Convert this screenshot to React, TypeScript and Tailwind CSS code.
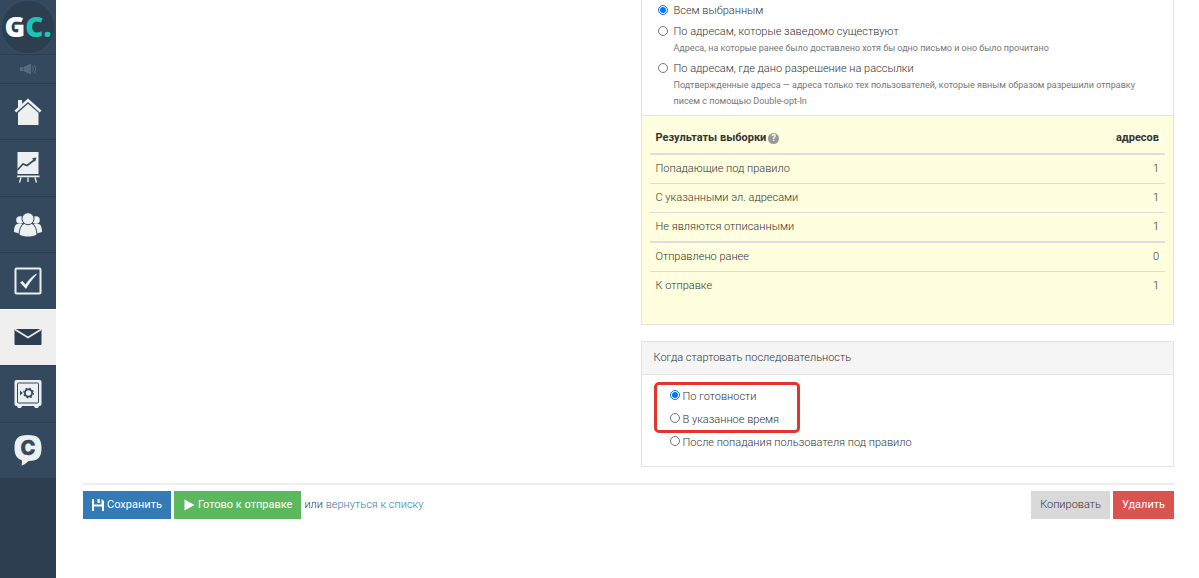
import React from 'react';

interface StatRow {
    label: string;
    value: number;
    // Divider drawn above the row
    divider: string;
}

const STATS: StatRow[] = [
    { label: 'Попадающие под правило', value: 1, divider: 'border-t-2' },
    { label: 'С указанными эл. адресами', value: 1, divider: 'border-t' },
    { label: 'Не являются отписанными', value: 1, divider: 'border-t' },
    { label: 'Отправлено ранее', value: 0, divider: 'border-t-2' },
    { label: 'К отправке', value: 1, divider: 'border-t' },
];

const AUDIENCE = [
    { id: 'all', label: 'Всем выбранным' },
    {
        id: 'existing',
        label: 'По адресам, которые заведомо существуют',
        hint: 'Адреса, на которые ранее было доставлено хотя бы одно письмо и оно было прочитано',
    },
    {
        id: 'confirmed',
        label: 'По адресам, где дано разрешение на рассылки',
        hint: 'Подтвержденные адреса — адреса только тех пользователей, которые явным образом разрешили отправку писем с помощью Double-opt-In',
    },
];

const HomeIcon = () => (
    <svg viewBox="0 0 28 28" className="h-7 w-7" fill="currentColor">
        <path d="M4 2h4v4.500L4 10z" />
        <path d="M14 0.500 0.500 12.500 2.200 14.500 14 4 25.800 14.500 27.500 12.500z" />
        <path d="M14 5.800 4 14.700V27h20.500V14.700z" />
    </svg>
);

const ChartIcon = () => (
    <svg viewBox="0 0 28 34" className="h-[34px] w-7">
        <path d="M3.500 1h21v22h-21zM3 24.500h22.500v1.800H3z" fill="currentColor" />
        <path d="M3.500 19 9 13l4 1.500 8-6" fill="none" stroke="#34495e" strokeWidth="1.600" />
        <path d="m18 7.300 4.500-.8-1.500 4.300z" fill="#34495e" />
        <path d="M7 26.500 5.500 31.500M14 26.500v4.500M21 26.500l1.500 5" stroke="currentColor" strokeWidth="1.300" />
    </svg>
);

const UsersIcon = () => (
    <svg viewBox="0 0 28 26" className="h-[26px] w-7" fill="currentColor">
        <circle cx="6" cy="8" r="3.800" />
        <circle cx="22" cy="8" r="3.800" />
        <path d="M2 12.500c2-1 5-1 6.500 0L5 21.500 0 20c0-3 .5-6 2-7.500zM26 12.500c-2-1-5-1-6.500 0l3.500 9 5-1.500c0-3-.5-6-2-7.500z" />
        <g stroke="#34495e" strokeWidth="1">
            <path d="M9 12c3-1.500 7-1.500 10 0 2.500 2 4 7 4 11-5 2.700-13 2.700-18 0 0-4 1.500-9 4-11z" />
            <circle cx="14" cy="6.700" r="6" />
        </g>
    </svg>
);

const TaskIcon = () => (
    <svg viewBox="0 0 28 28" className="h-7 w-7">
        <rect x="1.500" y="1.500" width="25" height="25" rx="1" fill="none" stroke="currentColor" strokeWidth="2" />
        <path d="M6 15.500 8.500 14l3 3.500C14.500 13 18 9 22.500 6.500v1.200C18.500 12 15 16.500 12 22z" fill="currentColor" />
    </svg>
);

const MailIcon = () => (
    <svg viewBox="0 0 28 18" className="h-[18px] w-7">
        <rect x="0.500" y="1" width="27" height="16" rx="1" fill="currentColor" />
        <path d="m1 1.500 13 8 13-8" fill="none" stroke="#efefef" strokeWidth="1.500" />
    </svg>
);

const SafeIcon = () => (
    <svg viewBox="0 0 28 28" className="h-7 w-7">
        <path d="M2.500 0h23a2 2 0 0 1 2 2v22a2 2 0 0 1-2 2H25l-1 2h-3l-1-2H8l-1 2H4l-1-2h-.5a2 2 0 0 1-2-2V2a2 2 0 0 1 2-2z" fill="currentColor" />
        <rect x="3.500" y="3" width="21" height="20" rx="1" fill="none" stroke="#34495e" strokeWidth="1" />
        <circle cx="14.500" cy="13" r="3.600" fill="none" stroke="#34495e" strokeWidth="1.800" />
        <circle cx="14.500" cy="13" r="4.800" fill="none" stroke="#34495e" strokeWidth="1.200" strokeDasharray="1.900 1.870" />
        <path d="m6 10.500 2.800 2.500L6 15.500z" fill="#34495e" />
    </svg>
);

const ChatIcon = () => (
    <svg viewBox="0 0 28 32" className="h-8 w-7">
        <path d="M14 1c10 0 13.500 3.500 13.500 13S24 27 14.500 27c-1.500 1.800-4 3.500-7 4.500.6-1.500.6-3.500.3-5.300C2.500 24.500.5 20.500.5 14 .5 4.500 4 1 14 1z" fill="currentColor" />
        <text x="14" y="21" textAnchor="middle" fill="#34495e" stroke="#34495e" strokeWidth="0.500" className="font-[Inter] text-[20px] font-extrabold">C</text>
    </svg>
);

const HornIcon = () => (
    <svg viewBox="0 0 18 12" className="h-3 w-[18px]" fill="currentColor">
        <path d="M1 4h3v4H1zM4.500 4 12 .5v11L4.500 8z" />
        <path d="M13.500 3.500q1.500 2.500 0 5M15.500 2q2.500 4 0 8" fill="none" stroke="currentColor" />
    </svg>
);

const NAV = [
    { title: 'Главная', Icon: HomeIcon },
    { title: 'Статистика', Icon: ChartIcon },
    { title: 'Пользователи', Icon: UsersIcon },
    { title: 'Задачи', Icon: TaskIcon },
    { title: 'Рассылки', Icon: MailIcon, active: true },
    { title: 'Финансы', Icon: SafeIcon },
    { title: 'Чаты', Icon: ChatIcon },
];

const Sidebar: React.FC = () => (
    <aside className="w-14 shrink-0 bg-[#2c3e50]">
        <div className="bg-[#34495e]">
            <a href="#home" aria-label="GC" className="flex h-[54px] items-center justify-center">
                <span className="flex h-[52px] w-[52px] items-center justify-center rounded-full bg-[#2c3e50] pb-[3px] font-['Open_Sans'] text-[28px] leading-none font-extrabold text-white">
                    G<span className="text-[#1cc4b4]">C.</span>
                </span>
            </a>
            <button aria-label="Уведомления" className="flex h-[29px] w-full items-center justify-center border-t border-[#2c3e50] text-[#566b80]">
                <HornIcon />
            </button>
        </div>
        <nav className="grid h-[395px] grid-rows-7">
            {NAV.map(({ title, Icon, active }) => (
                <a
                    key={title}
                    href="#section"
                    aria-label={title}
                    className={`flex items-center justify-center border-t ${active ? 'border-white bg-[#efefef] text-[#2c3e50]' : 'border-[#2c3e50] bg-[#34495e] text-[#ecf0f1]'}`}
                >
                    <Icon />
                </a>
            ))}
        </nav>
    </aside>
);

const AudiencePanel: React.FC = () => (
    <section className="border border-t-0 border-[#e3e3e3]">
        <div className="flex flex-col gap-1 px-4 pt-[2px] pb-[6px]">
            {AUDIENCE.map(({ id, label, hint }) => (
                <div key={id} className="flex gap-[6px]">
                    <input type="radio" id={id} name="audience" defaultChecked={id === 'all'} className="mt-[3px] h-[10px] w-[10px] shrink-0" />
                    <label htmlFor={id} className="leading-[17px]">
                        {label}
                        {hint && <span className="block text-[9px] leading-4 font-normal text-[#777]">{hint}</span>}
                    </label>
                </div>
            ))}
        </div>
        <div className="border-t border-[#e3e3e3] bg-[#ffffdf] px-2 pt-[6px] pb-6">
            <table className="w-full border-separate border-spacing-0">
                <thead>
                    <tr className="text-[#333]">
                        <th className="px-[6px] pt-2 pb-[7px] text-left font-bold">
                            <span className="flex items-center gap-[2px]">
                                Результаты выборки
                                <span className="flex h-[11px] w-[11px] items-center justify-center rounded-full bg-[#999] text-[9px] leading-none text-[#ffffdf]">?</span>
                            </span>
                        </th>
                        <th className="px-[6px] pt-2 pb-[7px] text-right font-bold">адресов</th>
                    </tr>
                </thead>
                <tbody>
                    {STATS.map(({ label, value, divider }) => (
                        <tr key={label}>
                            <td className={`border-[#ddd] px-[6px] py-[6px] ${divider}`}>{label}</td>
                            <td className={`border-[#ddd] px-[6px] py-[6px] text-right ${divider}`}>{value}</td>
                        </tr>
                    ))}
                </tbody>
            </table>
        </div>
    </section>
);

const StartOption: React.FC<{ id: string; label: string; checked?: boolean }> = ({ id, label, checked }) => (
    <div className="flex items-start gap-[3px]">
        <input type="radio" id={id} name="start" defaultChecked={checked} className="mt-[5px] h-[10px] w-[10px]" />
        <label htmlFor={id} className="leading-[23px]">{label}</label>
    </div>
);

const StartPanel: React.FC = () => (
    <section className="mt-4 border border-[#e3e3e3]">
        <h2 className="border-b border-[#e3e3e3] bg-[#f5f5f5] px-3 py-2">Когда стартовать последовательность</h2>
        <div className="px-7 pt-[10px] pb-3">
            <div className="relative">
                <StartOption id="ready" label="По готовности" checked />
                <StartOption id="scheduled" label="В указанное время" />
                <div className="pointer-events-none absolute -top-[3px] -left-4 h-[51px] w-[146px] rounded-[5px] border-3 border-[#e2352b]" />
            </div>
            <StartOption id="matched" label="После попадания пользователя под правило" />
        </div>
    </section>
);

const Actions: React.FC = () => (
    <footer className="mt-4 flex items-center gap-[3px] border-t-2 border-[#eee] pt-[6px]">
        <button className="flex h-7 items-center gap-[3px] bg-[#337ab7] px-[9px] font-normal text-white">
            <svg viewBox="0 0 12 12" className="h-3 w-3" fill="currentColor">
                <path d="M0 0h2v5.500h7.500V0L12 2v10h-2V7.500H2V12H0zM5.500 0h2.200v4H5.500z" />
            </svg>
            Сохранить
        </button>
        <button className="flex h-7 items-center gap-[3px] bg-[#5cb85c] px-[9px] font-normal text-white">
            <svg viewBox="0 0 12 12" className="h-3 w-3" fill="currentColor">
                <path d="M1.500.5 11.500 6l-10 5.500z" />
            </svg>
            Готово к отправке
        </button>
        <span>
            или <a href="#list" className="text-[#337ab7]">вернуться к списку</a>
        </span>
        <button className="ml-auto h-7 bg-[#d9d9d9] px-[9px]">Копировать</button>
        <button className="h-7 bg-[#d9534f] px-[9px] font-normal text-white">Удалить</button>
    </footer>
);

export default function App() {
    return (
        <div className="flex min-h-screen bg-white font-[Roboto,sans-serif] text-[11px] leading-4 font-light text-[#333]">
            <Sidebar />
            <main className="min-w-0 flex-1 pr-[25px] pl-[27px]">
                <div className="grid grid-cols-2 gap-6">
                    <div className="col-start-2">
                        <AudiencePanel />
                        <StartPanel />
                    </div>
                </div>
                <Actions />
            </main>
        </div>
    );
}
